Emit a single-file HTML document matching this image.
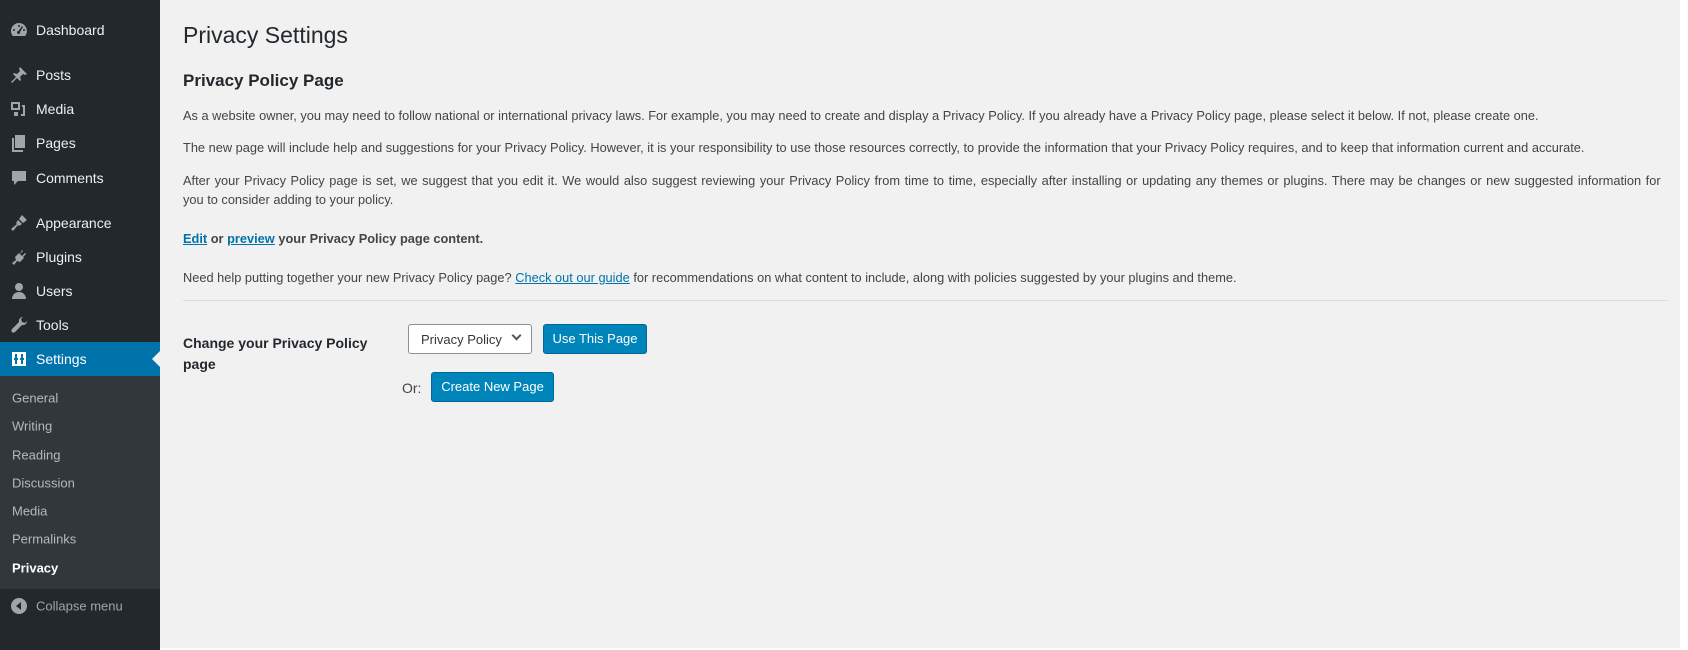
<!DOCTYPE html>
<html><head><meta charset="utf-8"><style>
*{margin:0;padding:0;box-sizing:border-box}
body{width:1688px;height:650px;overflow:hidden;background:#f1f1f1;font-family:"Liberation Sans",sans-serif;color:#444;font-size:13px;position:relative}
#side{position:absolute;left:0;top:0;width:160px;height:650px;background:#23282d}
.mi{position:absolute;left:0;width:160px;height:34px;color:#eee;font-size:14px}
.mi span{position:absolute;left:36px;top:50%;transform:translateY(-50%)}
.mi svg{position:absolute;left:9px;top:50%;transform:translateY(-50%);width:20px;height:20px;fill:#a0a5aa}
#cur{background:#0073aa;color:#fff}
#cur svg{fill:#fff}
#sub{position:absolute;top:376px;left:0;width:160px;height:213px;background:#32373c}
.si{position:absolute;left:12px;color:#b4b9be;font-size:13px;transform:translateY(-50%)}
#main{position:absolute;left:183px;top:0;right:0}
.a{position:absolute;white-space:nowrap}
p.a{font-size:12.8px;color:#444}
a{color:#0073aa;text-decoration:underline}
.btn{position:absolute;background:#0085ba;border:1px solid #006799;border-radius:3px;color:#fff;font-size:13px;text-align:center}
</style></head><body>
<div id="side">
<div class="mi" style="top:13px"><svg viewBox="0 0 20 20"><path d="M10 3a8 8 0 0 0-8 8c0 2 .7 3.7 1.9 5h12.2A8 8 0 0 0 10 3zm0 2a1 1 0 1 1 0 2 1 1 0 0 1 0-2zM5 9a1 1 0 1 1 0 2 1 1 0 0 1 0-2zm10 0a1 1 0 1 1 0 2 1 1 0 0 1 0-2zm-2-3l1 1-3 5a1.5 1.5 0 1 1-1.5-1z"/></svg><span>Dashboard</span></div>
<div class="mi" style="top:58px"><svg viewBox="0 0 20 20"><path d="M11 2l7 7-2 1-2-1-3 3 1 3-1 1-3-3-5 5-1-1 5-5-3-3 1-1 3 1 3-3-1-2z"/></svg><span>Posts</span></div>
<div class="mi" style="top:92px"><svg viewBox="0 0 20 20"><path d="M2 3h9v8H2zm2 2v4h5V5zm9 1h3v11h-4v-2h2V8h-1zM5 13h4v4H5z"/></svg><span>Media</span></div>
<div class="mi" style="top:126px"><svg viewBox="0 0 20 20"><path d="M6 2h10v13H6zM3 5h2v12h9v2H3z"/></svg><span>Pages</span></div>
<div class="mi" style="top:161px"><svg viewBox="0 0 20 20"><path d="M3 3h14v10H9l-4 4v-4H3z"/></svg><span>Comments</span></div>
<div class="mi" style="top:206px"><svg viewBox="0 0 20 20"><path d="M13 2l5 5-4 3-4-4zM9 7l4 4-3 2-1-1-5 6-2-2 6-5-1-1z"/></svg><span>Appearance</span></div>
<div class="mi" style="top:240px"><svg viewBox="0 0 20 20"><path d="M13 3l1 1-3 3 2 2 3-3 1 1-3 3 1 1-4 4-3-1-3 4-2-2 4-3-1-3 4-4 1 1z"/></svg><span>Plugins</span></div>
<div class="mi" style="top:274px"><svg viewBox="0 0 20 20"><path d="M10 2a4 4 0 1 1 0 8 4 4 0 0 1 0-8zM3 18c0-4 3-7 7-7s7 3 7 7z"/></svg><span>Users</span></div>
<div class="mi" style="top:308px"><svg viewBox="0 0 20 20"><path d="M14 2a4 4 0 0 0-4 5L3 14a2 2 0 0 0 3 3l7-7a4 4 0 0 0 5-4l-2 2-3-1-1-3z"/></svg><span>Tools</span></div>
<div class="mi" id="cur" style="top:342px"><svg viewBox="0 0 20 20"><path d="M3 3h14v14H3zm3 2v4H5v2h1v4h2v-4h1V9H8V5zm6 0v4h-1v2h1v4h2v-4h1V9h-1V5z"/></svg><span>Settings</span>
<div style="position:absolute;right:0;top:9px;border:8px solid transparent;border-right-color:#f1f1f1"></div></div>
<div id="sub">
<div class="si" style="top:22px">General</div>
<div class="si" style="top:50px">Writing</div>
<div class="si" style="top:79px">Reading</div>
<div class="si" style="top:107px">Discussion</div>
<div class="si" style="top:135px">Media</div>
<div class="si" style="top:163px">Permalinks</div>
<div class="si" style="top:192px;color:#fff;font-weight:bold">Privacy</div>
</div>
<div class="mi" style="top:589px;color:#a0a5aa;font-size:13px"><svg viewBox="0 0 20 20"><path d="M10 2a8 8 0 1 1 0 16 8 8 0 0 1 0-16zm2 4l-5 4 5 4z"/></svg><span>Collapse menu</span></div>
</div>
<div style="position:absolute;right:0;top:0;width:8px;height:650px;background:#fff"></div>
<div style="position:absolute;left:160px;right:0;bottom:0;height:2px;background:#fff"></div>
<div id="main">
<div class="a" style="top:22px;font-size:23px;color:#23282d">Privacy Settings</div>
<div class="a" style="top:71px;font-size:17px;font-weight:bold;color:#23282d">Privacy Policy Page</div>
<p class="a" style="top:108px">As a website owner, you may need to follow national or international privacy laws. For example, you may need to create and display a Privacy Policy. If you already have a Privacy Policy page, please select it below. If not, please create one.</p>
<p class="a" style="top:140px">The new page will include help and suggestions for your Privacy Policy. However, it is your responsibility to use those resources correctly, to provide the information that your Privacy Policy requires, and to keep that information current and accurate.</p>
<p class="a" style="top:173px;word-spacing:1px">After your Privacy Policy page is set, we suggest that you edit it. We would also suggest reviewing your Privacy Policy from time to time, especially after installing or updating any themes or plugins. There may be changes or new suggested information for</p>
<p class="a" style="top:192px">you to consider adding to your policy.</p>
<p class="a" style="top:231px;font-weight:bold"><a href="#">Edit</a> or <a href="#">preview</a> your Privacy Policy page content.</p>
<p class="a" style="top:270px">Need help putting together your new Privacy Policy page? <a href="#">Check out our guide</a> for recommendations on what content to include, along with policies suggested by your plugins and theme.</p>
<div style="position:absolute;top:300px;left:0;width:1485px;height:1px;background:#ddd"></div>
<div class="a" style="top:333px;font-size:14px;font-weight:bold;color:#23282d;line-height:21px">Change your Privacy Policy<br>page</div>
</div>
<div style="position:absolute;left:408px;top:324px;width:124px;height:30px;background:#fff;border:1px solid #8c8f94;border-radius:3px;font-size:13px;color:#32373c;padding:7px 0 0 12px">Privacy Policy<span style="position:absolute;right:11px;top:7px;width:7px;height:7px;border-right:2px solid #555;border-bottom:2px solid #555;transform:rotate(45deg)"></span></div>
<div class="btn" style="left:543px;top:324px;width:104px;height:30px;line-height:28px">Use This Page</div>
<div class="a" style="left:402px;top:380px;font-size:14px">Or:</div>
<div class="btn" style="left:431px;top:372px;width:123px;height:30px;line-height:28px">Create New Page</div>
</body></html>
